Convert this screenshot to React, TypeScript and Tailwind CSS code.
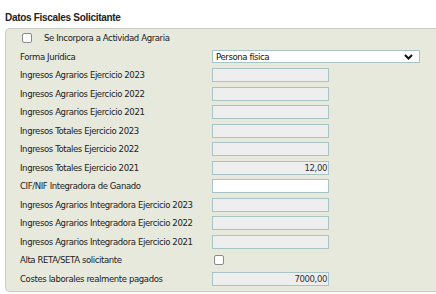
const rows: { label: string; kind: "input" | "white" | "check"; value?: string }[] = [
  { label: "Ingresos Agrarios Ejercicio 2023", kind: "input" },
  { label: "Ingresos Agrarios Ejercicio 2022", kind: "input" },
  { label: "Ingresos Agrarios Ejercicio 2021", kind: "input" },
  { label: "Ingresos Totales Ejercicio 2023", kind: "input" },
  { label: "Ingresos Totales Ejercicio 2022", kind: "input" },
  { label: "Ingresos Totales Ejercicio 2021", kind: "input", value: "12,00" },
  { label: "CIF/NIF Integradora de Ganado", kind: "white" },
  { label: "Ingresos Agrarios Integradora Ejercicio 2023", kind: "input" },
  { label: "Ingresos Agrarios Integradora Ejercicio 2022", kind: "input" },
  { label: "Ingresos Agrarios Integradora Ejercicio 2021", kind: "input" },
  { label: "Alta RETA/SETA solicitante", kind: "check" },
  { label: "Costes laborales realmente pagados", kind: "input", value: "7000,00" },
]

const Check = () => (
  <div className="w-[10px] h-[10px] rounded-[2px] border border-[#8a8a8a] bg-white" />
)

export default function App() {
  return (
    <div
      className="w-[436px] h-[294px] bg-white text-[#222] overflow-hidden"
      style={{ fontFamily: '"DejaVu Sans Condensed", "DejaVu Sans", sans-serif' }}
    >
      <div
        className="h-[28px] pl-[5px] pt-[10px] text-[10px] font-bold text-[#222] tracking-[-0.3px]"
        style={{ fontFamily: '"Liberation Sans", Arial, sans-serif' }}
      >
        Datos Fiscales Solicitante
      </div>
      <div className="ml-[5px] border border-r-0 border-[#c9cbc4] rounded-l-[5px] bg-[#e6e9dc] pb-[3px] text-[9.5px] tracking-[-0.4px]">
        <div className="h-[18.5px] flex items-center pl-[16px]">
          <Check />
          <span className="ml-[12px]">Se Incorpora a Actividad Agraria</span>
        </div>
        <div className="h-[18.5px] flex items-center pl-[14px]">
          <span className="w-[192px]">Forma Jurídica</span>
          <div className="w-[208px] h-[13px] bg-white border border-[#a9c4c4] flex items-center justify-between pl-[3px] pr-[6px] text-[#111]">
            <span>Persona física</span>
            <svg width="9" height="6" viewBox="0 0 9 6">
              <path d="M1 1 L4.5 4.5 L8 1" fill="none" stroke="#111" strokeWidth="2" />
            </svg>
          </div>
        </div>
        {rows.map(r => (
          <div key={r.label} className="h-[18.5px] flex items-center pl-[14px]">
            <span className="w-[192px]">{r.label}</span>
            {r.kind === "check" ? (
              <div className="ml-[2px]">
                <Check />
              </div>
            ) : (
              <div
                className={
                  r.kind === "white"
                    ? "w-[117px] h-[14px] bg-white border border-[#a9c4c4]"
                    : "w-[117px] h-[14px] bg-[#eeeeee] border border-[#a9c4c4] flex items-center justify-end pr-[1px] text-[#333]"
                }
              >
                {r.value}
              </div>
            )}
          </div>
        ))}
      </div>
    </div>
  )
}
